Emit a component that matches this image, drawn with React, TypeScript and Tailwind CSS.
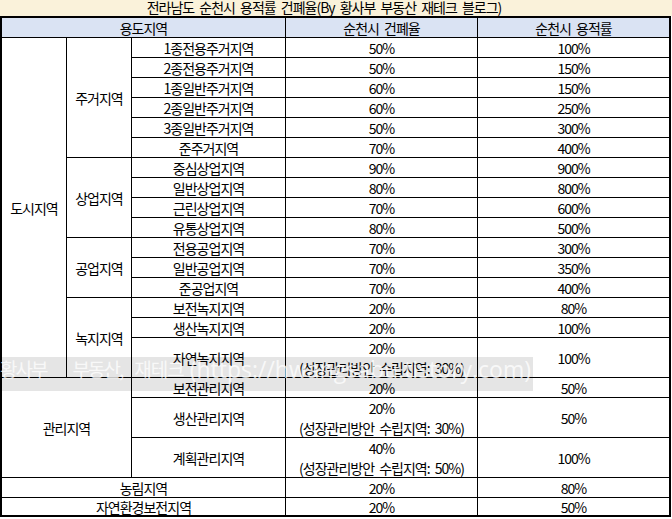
import React from 'react';

type Cell = { text: string | string[]; span?: string; head?: boolean };

const font = { fontFamily: '"Noto Sans CJK KR", "Noto Sans", sans-serif' };

const CELLS: Cell[] = [
    { text: '용도지역', span: 'col-span-3', head: true },
    { text: '순천시 건폐율', head: true },
    { text: '순천시 용적률', head: true },

    { text: '도시지역', span: 'row-span-17' },
    { text: '주거지역', span: 'row-span-6' },
    { text: '1종전용주거지역' }, { text: '50%' }, { text: '100%' },
    { text: '2종전용주거지역' }, { text: '50%' }, { text: '150%' },
    { text: '1종일반주거지역' }, { text: '60%' }, { text: '150%' },
    { text: '2종일반주거지역' }, { text: '60%' }, { text: '250%' },
    { text: '3종일반주거지역' }, { text: '50%' }, { text: '300%' },
    { text: '준주거지역' }, { text: '70%' }, { text: '400%' },

    { text: '상업지역', span: 'row-span-4' },
    { text: '중심상업지역' }, { text: '90%' }, { text: '900%' },
    { text: '일반상업지역' }, { text: '80%' }, { text: '800%' },
    { text: '근린상업지역' }, { text: '70%' }, { text: '600%' },
    { text: '유통상업지역' }, { text: '80%' }, { text: '500%' },

    { text: '공업지역', span: 'row-span-3' },
    { text: '전용공업지역' }, { text: '70%' }, { text: '300%' },
    { text: '일반공업지역' }, { text: '70%' }, { text: '350%' },
    { text: '준공업지역' }, { text: '70%' }, { text: '400%' },

    { text: '녹지지역', span: 'row-span-4' },
    { text: '보전녹지지역' }, { text: '20%' }, { text: '80%' },
    { text: '생산녹지지역' }, { text: '20%' }, { text: '100%' },
    { text: '자연녹지지역', span: 'row-span-2' },
    { text: ['20%', '(성장관리방안 수립지역: 30%)'], span: 'row-span-2' },
    { text: '100%', span: 'row-span-2' },

    { text: '관리지역', span: 'col-span-2 row-span-5' },
    { text: '보전관리지역' }, { text: '20%' }, { text: '50%' },
    { text: '생산관리지역', span: 'row-span-2' },
    { text: ['20%', '(성장관리방안 수립지역: 30%)'], span: 'row-span-2' },
    { text: '50%', span: 'row-span-2' },
    { text: '계획관리지역', span: 'row-span-2' },
    { text: ['40%', '(성장관리방안 수립지역: 50%)'], span: 'row-span-2' },
    { text: '100%', span: 'row-span-2' },

    { text: '농림지역', span: 'col-span-3' }, { text: '20%' }, { text: '80%' },
    { text: '자연환경보전지역', span: 'col-span-3' }, { text: '20%' }, { text: '50%' },
];

export default function App() {
    return (
        <div className="relative w-[672px] h-[519px] bg-white text-black overflow-hidden" style={font}>
            {/* title bar */}
            <div className="h-[16px] bg-[#faf2da] text-center pr-[24px] text-[14px] leading-[15px] tracking-[-1px] [word-spacing:3px] whitespace-nowrap">
                전라남도 순천시 용적률 건폐율(By 황사부 부동산 재테크 블로그)
            </div>

            <div className="grid w-max grid-cols-[64px_64px_153px_191px_191px] grid-rows-[repeat(24,19px)_17px] gap-px bg-black border-2 border-black">
                {CELLS.map((c, i) => (
                    <div
                        key={i}
                        className={`${c.span ?? ''} ${c.head ? 'bg-[#dae3f3]' : 'bg-white'} flex flex-col items-center justify-center text-center text-[14px] leading-[20px] tracking-[-1px] [word-spacing:3px] whitespace-nowrap`}
                    >
                        {Array.isArray(c.text)
                            ? c.text.map((t, j) => <span key={j}>{t}</span>)
                            : c.text}
                    </div>
                ))}
            </div>

            {/* blog watermark band */}
            <div className="absolute left-0 top-[357px] w-[533px] h-[34px] bg-black/10 flex items-start pt-[1px] text-white/75 whitespace-nowrap">
                <span className="text-[19px] leading-[22px] tracking-[-2px]">황사부</span>
                <span className="ml-[26px] text-[19px] leading-[22px] tracking-[-2px]">부동산,</span>
                <span className="ml-[12px] text-[19px] leading-[22px] tracking-[-1px]">재테크</span>
                <span className="ml-[6px] text-[23px] leading-[22px]" style={{ fontFamily: '"Open Sans", sans-serif' }}>
                    (https://hwangsabu.tistory.com)
                </span>
            </div>
        </div>
    );
}
